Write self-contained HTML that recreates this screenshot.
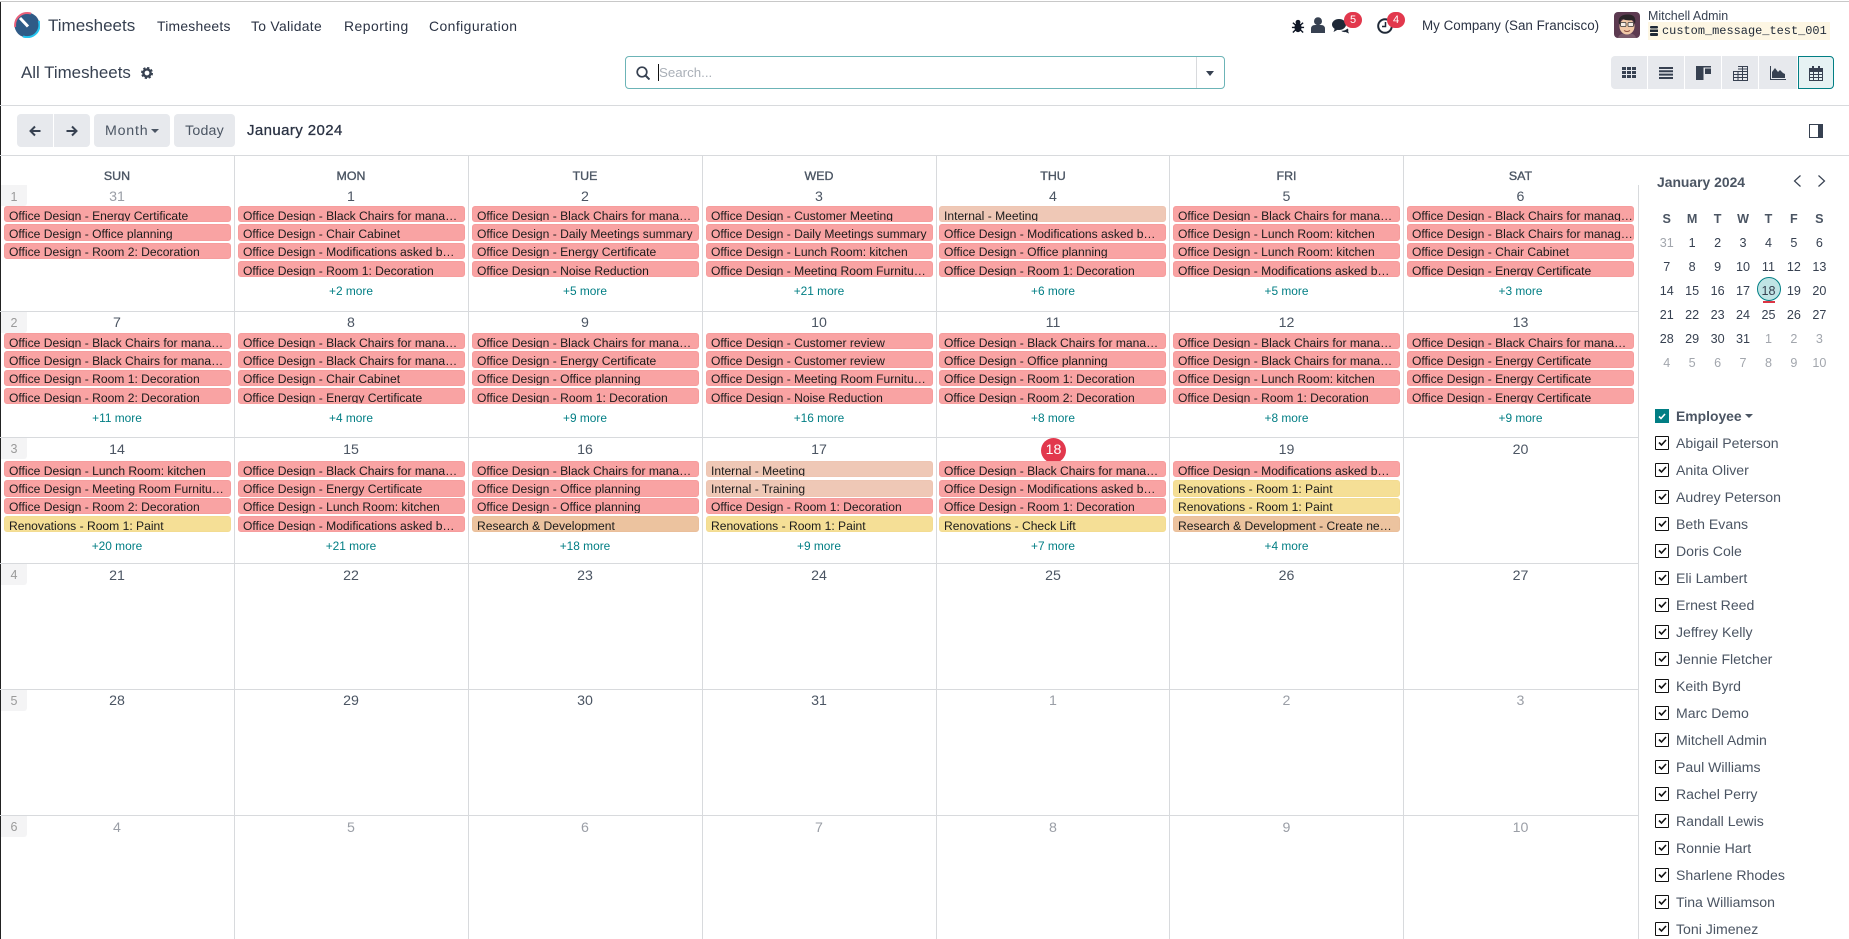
<!DOCTYPE html>
<html lang="en"><head><meta charset="utf-8"><title>Timesheets</title>
<style>
html,body{margin:0;padding:0;background:#fff}
body{position:relative;width:1849px;height:939px;overflow:hidden;font-family:"Liberation Sans",sans-serif;color:#374151}
div,span,svg{position:absolute}
.t{white-space:nowrap}
.hl{left:0;width:1849px;height:1px;background:#d8dadd}
.vl{top:155px;height:784px;width:1px;background:#d8dadd}
.rl{left:0;width:1638px;height:1px;background:#d8dadd}
.m{top:18px;line-height:16px;font-size:13.9px;color:#2b3344;white-space:nowrap}
.btn{top:114px;height:33px;background:#e7e9ed;border-radius:4px;font-size:14.2px;line-height:35px;color:#4b5563;text-align:center}
.vb{top:56px;height:33px;width:36px;background:#e7e9ed}
.hd{top:168px;width:234px;text-align:center;font-size:12.4px;line-height:16px;color:#4b5563;-webkit-text-stroke:.35px #4b5563}
.d{width:234px;text-align:center;font-size:14.2px;line-height:16px;color:#4b5563}
.g{color:#9a9ea6}
.w{left:1px;width:26px;background:#f4f4f5;border-radius:0 0 3px 0;color:#9a9a9a;font-size:12.5px;text-align:center}
.e{width:227px;box-sizing:border-box;padding-left:4px;border:1px solid #f69d9d;border-radius:3px;background:#f9a3a3;overflow:hidden;white-space:nowrap;font-size:12.1px;color:#1b1b1b}
.y{background:#f5df96;border-color:#f3dc92}.n{background:#efc8b6;border-color:#eec5b2}.b{background:#ecc39f;border-color:#eabf9b}
.k0{left:4px}.k1{left:238px}.k2{left:472px}.k3{left:706px}.k4{left:939px}.k5{left:1173px}.k6{left:1407px}
.l0{left:0}.l1{left:234px}.l2{left:468px}.l3{left:702px}.l4{left:936px}.l5{left:1169.5px}.l6{left:1403.5px}
.a1{top:206px;height:16px;line-height:18px}.a2{top:224px;height:17px;line-height:18px}.a3{top:243px;height:16px;line-height:16px}.a4{top:261px;height:16px;line-height:18px}
.b1{top:333px;height:16px;line-height:18px}.b2{top:351px;height:17px;line-height:18px}.b3{top:370px;height:16px;line-height:16px}.b4{top:388px;height:16px;line-height:18px}
.c1{top:461px;height:16px;line-height:18px}.c2{top:480px;height:17px;line-height:16px}.c3{top:498px;height:16px;line-height:16px}.c4{top:516px;height:16px;line-height:18px}
.o{width:234px;text-align:center;font-size:11.9px;line-height:14px;color:#017e84}
.mc{left:1654px;top:206.5px;display:grid;grid-template-columns:repeat(7,25.45px);grid-auto-rows:24px;font-size:12.6px;line-height:24px;text-align:center;color:#374151}
.mc b{font-weight:bold;color:#4b5563}
.mc i{font-style:normal;color:#a2a6ad}
.mc span{position:static}
.cb{left:1655px;width:12px;height:12px;border:1px solid #111;background:#fff;border-radius:1px}
.cb svg{left:1.5px;top:2px}
.nm{left:1676px;font-size:14.1px;line-height:16px;color:#4b5563;white-space:nowrap}
</style></head><body>

<div style="left:0;top:1px;width:1849px;height:1px;background:#c8c8c8"></div>
<div style="left:0;top:2px;width:1px;height:937px;background:#222"></div>

<svg style="left:14px;top:12px" width="26" height="26" viewBox="0 0 26 26"><circle cx="13" cy="13" r="12.5" fill="#2f5b87"/><path d="M1.2 15A12.2 12.2 0 0 1 17 1.6" fill="none" stroke="#e8607a" stroke-width="2"/><path d="M24.8 9A12.2 12.2 0 0 1 9 24.4" fill="none" stroke="#25c5f0" stroke-width="2"/><path d="M14 14.5L6 6" stroke="#fff" stroke-width="3"/></svg>
<div class="t" style="left:48px;top:16px;font-size:17px;line-height:20px;color:#374151">Timesheets</div>
<div class="m" style="left:157px;letter-spacing:.24px">Timesheets</div>
<div class="m" style="left:251px;letter-spacing:.3px">To Validate</div>
<div class="m" style="left:344px;letter-spacing:.5px">Reporting</div>
<div class="m" style="left:429px;letter-spacing:.45px">Configuration</div>

<svg style="left:1291px;top:19px" width="14" height="14" viewBox="0 0 14 15"><ellipse cx="7" cy="9" rx="3.8" ry="5" fill="#111827"/><circle cx="7" cy="3.5" r="2.6" fill="#111827"/><path d="M1.500 4l3 2.500M12.500 4l-3 2.500M.5 9h3M13.500 9h-3M1.500 14.500l3-3M12.500 14.500l-3-3" stroke="#111827" stroke-width="1.500"/></svg>
<svg style="left:1311px;top:17px" width="14" height="16" viewBox="0 0 14 16"><circle cx="7" cy="4.200" r="4" fill="#374151"/><path d="M0 16V12Q0 8 4 8H10Q14 8 14 12V16Z" fill="#374151"/></svg>
<svg style="left:1332px;top:19px" width="18" height="15" viewBox="0 0 18 15"><ellipse cx="7" cy="5.500" rx="7" ry="5.500" fill="#1f2937"/><path d="M3 9L1.500 13 7 10Z" fill="#1f2937"/><path d="M9 11.800Q13 12 15.500 9.500 17 11 16 12l1 2.500-3.500-1.500Q11 13.500 9 11.800Z" fill="#1f2937"/></svg>
<div style="left:1344px;top:12px;width:18px;height:16px;border-radius:8px;background:#e2384d;color:#fff;font-size:11px;line-height:16px;text-align:center">5</div>
<svg style="left:1377px;top:18px" width="16" height="16" viewBox="0 0 16 16"><circle cx="8" cy="8" r="6.800" fill="none" stroke="#1f2937" stroke-width="2"/><path d="M8.500 4v4.500H5" fill="none" stroke="#1f2937" stroke-width="1.500"/></svg>
<div style="left:1387px;top:12px;width:18px;height:16px;border-radius:8px;background:#e2384d;color:#fff;font-size:11px;line-height:16px;text-align:center">4</div>
<div class="t" style="left:1422px;top:18px;font-size:13.4px;line-height:16px;color:#2b3344">My Company (San Francisco)</div>

<svg style="left:1614px;top:12px" width="26" height="26" viewBox="0 0 26 26"><rect width="26" height="26" rx="4" fill="#5c3a50"/><path d="M4 26Q5 21 13 21T22 26Z" fill="#7a5a6b"/><ellipse cx="13" cy="14.500" rx="7.500" ry="8" fill="#f1c9a8"/><path d="M5 12Q3 3 13 2.500T21 12L19 8Q13 9 8 7 6 9 6.500 12Z" fill="#2a2528"/><rect x="6.500" y="10.500" width="5.500" height="4" rx="1" fill="#f6eee6" stroke="#333" stroke-width=".8"/><rect x="14" y="10.500" width="5.500" height="4" rx="1" fill="#f6eee6" stroke="#333" stroke-width=".8"/><path d="M10 18.500q3 2 6 0" stroke="#8a4b3a" fill="none"/></svg>
<div class="t" style="left:1648px;top:8.500px;font-size:12.45px;line-height:15px;color:#374151">Mitchell Admin</div>
<div style="left:1648px;top:22px;width:182px;height:18px;background:#fdf6e3"></div>
<svg style="left:1650px;top:26px" width="8" height="10" viewBox="0 0 8 10"><rect width="8" height="2.500" rx="1" fill="#1f2937"/><rect y="3.500" width="8" height="2.500" fill="#1f2937"/><rect y="7" width="8" height="3" rx="1" fill="#1f2937"/></svg>
<div class="t" style="left:1662px;top:23px;font-family:'Liberation Mono',monospace;font-size:11.95px;line-height:16px;color:#1f2937">custom_message_test_001</div>

<div class="t" style="left:21px;top:63px;font-size:16.9px;line-height:20px;color:#374151">All Timesheets</div>
<svg style="left:141px;top:67px" width="12" height="12" viewBox="0 0 12 12"><circle cx="6" cy="6" r="3.600" fill="none" stroke="#374151" stroke-width="2.400"/><circle cx="6" cy="6" r="5.200" fill="none" stroke="#374151" stroke-width="1.600" stroke-dasharray="2.300 1.780"/></svg>

<div style="left:625px;top:56px;width:598px;height:31px;border:1px solid #6cb4b7;border-radius:4px;background:#fff"></div>
<div style="left:1196px;top:57px;width:1px;height:31px;background:#d8dadd"></div>
<svg style="left:636px;top:66px" width="14" height="14" viewBox="0 0 14 14"><circle cx="6" cy="6" r="4.800" fill="none" stroke="#374151" stroke-width="1.700"/><path d="M9.500 9.500L13.500 13.500" stroke="#374151" stroke-width="2"/></svg>
<div style="left:658px;top:64px;width:1px;height:17px;background:#111"></div>
<div class="t" style="left:659px;top:65px;font-size:13.3px;line-height:16px;color:#aab0b8">Search...</div>
<svg style="left:1206px;top:71px" width="8" height="5" viewBox="0 0 8 5"><path d="M0 0H8L4 5Z" fill="#374151"/></svg>

<div class="vb" style="left:1611px;border-radius:4px 0 0 4px"></div><div class="vb" style="left:1648px"></div><div class="vb" style="left:1685px"></div><div class="vb" style="left:1722px"></div><div class="vb" style="left:1759px;width:38px"></div>
<div class="vb" style="left:1798px;width:34px;height:31px;background:#e6f2f3;border:1px solid #017e84;border-radius:0 4px 4px 0"></div>
<svg style="left:1622px;top:66px" width="14" height="13" viewBox="0 0 14 13"><path fill="#374151" d="M0 1h4v3H0zM5 1h4v3H5zM10 1h4v3h-4zM0 5h4v3H0zM5 5h4v3H5zM10 5h4v3h-4zM0 9h4v3H0zM5 9h4v3H5zM10 9h4v3h-4z"/></svg>
<svg style="left:1659px;top:66px" width="14" height="13" viewBox="0 0 14 13"><path fill="#374151" d="M0 1h14v2H0zM0 4.300h14v2H0zM0 7.600h14v2H0zM0 11h14v2H0z"/></svg>
<svg style="left:1696px;top:66px" width="15" height="14" viewBox="0 0 15 14"><path fill="#374151" d="M0 0h15v1.500H0zM0 1h7.500v13H0zM9 2.500h6v5.500H9z"/></svg>
<svg style="left:1733px;top:66px" width="15" height="15" viewBox="0 0 15 15"><path fill="none" stroke="#374151" d="M.5 5.500h14v9H.5zM5 .5h9.500v14M.5 8.500h14M.5 11.500h14M5 5.500v9M9.500.5v14M5 3h9.500"/></svg>
<svg style="left:1770px;top:66px" width="16" height="14" viewBox="0 0 16 14"><path fill="#374151" d="M2 12V6l3-4 3 4 2-2 3 3 2 1v4z"/><path fill="#374151" d="M0 0h1v13h15v1H0z"/></svg>
<svg style="left:1809px;top:66px" width="14" height="15" viewBox="0 0 14 15"><path fill="#374151" d="M0 2h14v4H0z"/><path fill="#374151" d="M3 0h2v3H3zM9 0h2v3H9z"/><path fill="none" stroke="#374151" d="M.5 5.500h13v9H.5zM.5 8.500h13M.5 11.500h13M4.500 5.500v9M9.500 5.500v9"/></svg>

<div class="hl" style="top:105px"></div>

<div class="btn" style="left:17px;width:36px;border-radius:4px 0 0 4px"></div>
<div class="btn" style="left:54px;width:36px;border-radius:0 4px 4px 0"></div>
<svg style="left:29px;top:125px" width="12" height="12" viewBox="0 0 12 12"><path d="M11.500 6H2M6 1.500L1.500 6 6 10.500" fill="none" stroke="#374151" stroke-width="2"/></svg>
<svg style="left:66px;top:125px" width="12" height="12" viewBox="0 0 12 12"><path d="M.5 6H10M6 1.500L10.500 6 6 10.500" fill="none" stroke="#374151" stroke-width="2"/></svg>
<div class="btn" style="left:94px;width:76px;text-align:left;text-indent:11px;letter-spacing:.8px">Month</div>
<svg style="left:151px;top:129px" width="8" height="4" viewBox="0 0 8 4"><path d="M0 0H8L4 4Z" fill="#4b5563"/></svg>
<div class="btn" style="left:174px;width:61px;letter-spacing:.2px">Today</div>
<div class="t" style="left:247px;top:123px;font-size:15px;letter-spacing:.4px;line-height:16px;color:#2b3344;-webkit-text-stroke:.3px #2b3344">January 2024</div>
<svg style="left:1809px;top:124px" width="14" height="14" viewBox="0 0 14 14"><rect x=".5" y=".5" width="13" height="13" fill="#fff" stroke="#374151"/><rect x="9" y="0" width="5" height="14" fill="#374151"/></svg>

<div class="hl" style="top:155px"></div>
<div class="vl" style="left:234px"></div><div class="vl" style="left:468px"></div><div class="vl" style="left:702px"></div><div class="vl" style="left:936px"></div><div class="vl" style="left:1169px"></div><div class="vl" style="left:1403px"></div><div class="vl" style="left:1638px;top:185px;height:754px"></div>
<div class="rl" style="top:311px"></div><div class="rl" style="top:437px"></div><div class="rl" style="top:563px"></div><div class="rl" style="top:689px"></div><div class="rl" style="top:815px"></div>

<div class="hd l0">SUN</div><div class="hd l1">MON</div><div class="hd l2">TUE</div><div class="hd l3">WED</div><div class="hd l4">THU</div><div class="hd l5">FRI</div><div class="hd l6">SAT</div>

<div class="w" style="top:185px;height:21px;line-height:24px">1</div>
<div class="w" style="top:312px;height:21px;line-height:22px">2</div>
<div class="w" style="top:438px;height:21px;line-height:22px">3</div>
<div class="w" style="top:564px;height:21px;line-height:22px">4</div>
<div class="w" style="top:690px;height:21px;line-height:22px">5</div>
<div class="w" style="top:816px;height:21px;line-height:22px">6</div>

<div class="d g l0" style="top:189px">31</div><div class="d l1" style="top:189px">1</div><div class="d l2" style="top:189px">2</div><div class="d l3" style="top:189px">3</div><div class="d l4" style="top:189px">4</div><div class="d l5" style="top:189px">5</div><div class="d l6" style="top:189px">6</div>
<div class="d l0" style="top:315px">7</div><div class="d l1" style="top:315px">8</div><div class="d l2" style="top:315px">9</div><div class="d l3" style="top:315px">10</div><div class="d l4" style="top:315px">11</div><div class="d l5" style="top:315px">12</div><div class="d l6" style="top:315px">13</div>
<div class="d l0" style="top:442px">14</div><div class="d l1" style="top:442px">15</div><div class="d l2" style="top:442px">16</div><div class="d l3" style="top:442px">17</div>
<div style="left:1041px;top:438px;width:25px;height:25px;border-radius:50%;background:#e2384d;color:#fff;font-size:14.2px;line-height:25px;text-align:center">18</div>
<div class="d l5" style="top:442px">19</div><div class="d l6" style="top:442px">20</div>
<div class="d l0" style="top:568px">21</div><div class="d l1" style="top:568px">22</div><div class="d l2" style="top:568px">23</div><div class="d l3" style="top:568px">24</div><div class="d l4" style="top:568px">25</div><div class="d l5" style="top:568px">26</div><div class="d l6" style="top:568px">27</div>
<div class="d l0" style="top:693px">28</div><div class="d l1" style="top:693px">29</div><div class="d l2" style="top:693px">30</div><div class="d l3" style="top:693px">31</div><div class="d g l4" style="top:693px">1</div><div class="d g l5" style="top:693px">2</div><div class="d g l6" style="top:693px">3</div>
<div class="d g l0" style="top:820px">4</div><div class="d g l1" style="top:820px">5</div><div class="d g l2" style="top:820px">6</div><div class="d g l3" style="top:820px">7</div><div class="d g l4" style="top:820px">8</div><div class="d g l5" style="top:820px">9</div><div class="d g l6" style="top:820px">10</div>

<div class="e k0 a1">Office Design - Energy Certificate</div><div class="e k0 a2">Office Design - Office planning</div><div class="e k0 a3">Office Design - Room 2: Decoration</div>
<div class="e k1 a1">Office Design - Black Chairs for mana…</div><div class="e k1 a2">Office Design - Chair Cabinet</div><div class="e k1 a3">Office Design - Modifications asked b…</div><div class="e k1 a4">Office Design - Room 1: Decoration</div><div class="o l1" style="top:284px">+2 more</div>
<div class="e k2 a1">Office Design - Black Chairs for mana…</div><div class="e k2 a2">Office Design - Daily Meetings summary</div><div class="e k2 a3">Office Design - Energy Certificate</div><div class="e k2 a4">Office Design - Noise Reduction</div><div class="o l2" style="top:284px">+5 more</div>
<div class="e k3 a1">Office Design - Customer Meeting</div><div class="e k3 a2">Office Design - Daily Meetings summary</div><div class="e k3 a3">Office Design - Lunch Room: kitchen</div><div class="e k3 a4">Office Design - Meeting Room Furnitu…</div><div class="o l3" style="top:284px">+21 more</div>
<div class="e n k4 a1">Internal - Meeting</div><div class="e k4 a2">Office Design - Modifications asked b…</div><div class="e k4 a3">Office Design - Office planning</div><div class="e k4 a4">Office Design - Room 1: Decoration</div><div class="o l4" style="top:284px">+6 more</div>
<div class="e k5 a1">Office Design - Black Chairs for mana…</div><div class="e k5 a2">Office Design - Lunch Room: kitchen</div><div class="e k5 a3">Office Design - Lunch Room: kitchen</div><div class="e k5 a4">Office Design - Modifications asked b…</div><div class="o l5" style="top:284px">+5 more</div>
<div class="e k6 a1">Office Design - Black Chairs for manag…</div><div class="e k6 a2">Office Design - Black Chairs for manag…</div><div class="e k6 a3">Office Design - Chair Cabinet</div><div class="e k6 a4">Office Design - Energy Certificate</div><div class="o l6" style="top:284px">+3 more</div>

<div class="e k0 b1">Office Design - Black Chairs for mana…</div><div class="e k0 b2">Office Design - Black Chairs for mana…</div><div class="e k0 b3">Office Design - Room 1: Decoration</div><div class="e k0 b4">Office Design - Room 2: Decoration</div><div class="o l0" style="top:411px">+11 more</div>
<div class="e k1 b1">Office Design - Black Chairs for mana…</div><div class="e k1 b2">Office Design - Black Chairs for mana…</div><div class="e k1 b3">Office Design - Chair Cabinet</div><div class="e k1 b4">Office Design - Energy Certificate</div><div class="o l1" style="top:411px">+4 more</div>
<div class="e k2 b1">Office Design - Black Chairs for mana…</div><div class="e k2 b2">Office Design - Energy Certificate</div><div class="e k2 b3">Office Design - Office planning</div><div class="e k2 b4">Office Design - Room 1: Decoration</div><div class="o l2" style="top:411px">+9 more</div>
<div class="e k3 b1">Office Design - Customer review</div><div class="e k3 b2">Office Design - Customer review</div><div class="e k3 b3">Office Design - Meeting Room Furnitu…</div><div class="e k3 b4">Office Design - Noise Reduction</div><div class="o l3" style="top:411px">+16 more</div>
<div class="e k4 b1">Office Design - Black Chairs for mana…</div><div class="e k4 b2">Office Design - Office planning</div><div class="e k4 b3">Office Design - Room 1: Decoration</div><div class="e k4 b4">Office Design - Room 2: Decoration</div><div class="o l4" style="top:411px">+8 more</div>
<div class="e k5 b1">Office Design - Black Chairs for mana…</div><div class="e k5 b2">Office Design - Black Chairs for mana…</div><div class="e k5 b3">Office Design - Lunch Room: kitchen</div><div class="e k5 b4">Office Design - Room 1: Decoration</div><div class="o l5" style="top:411px">+8 more</div>
<div class="e k6 b1">Office Design - Black Chairs for mana…</div><div class="e k6 b2">Office Design - Energy Certificate</div><div class="e k6 b3">Office Design - Energy Certificate</div><div class="e k6 b4">Office Design - Energy Certificate</div><div class="o l6" style="top:411px">+9 more</div>

<div class="e k0 c1">Office Design - Lunch Room: kitchen</div><div class="e k0 c2">Office Design - Meeting Room Furnitu…</div><div class="e k0 c3">Office Design - Room 2: Decoration</div><div class="e y k0 c4">Renovations - Room 1: Paint</div><div class="o l0" style="top:539px">+20 more</div>
<div class="e k1 c1">Office Design - Black Chairs for mana…</div><div class="e k1 c2">Office Design - Energy Certificate</div><div class="e k1 c3">Office Design - Lunch Room: kitchen</div><div class="e k1 c4">Office Design - Modifications asked b…</div><div class="o l1" style="top:539px">+21 more</div>
<div class="e k2 c1">Office Design - Black Chairs for mana…</div><div class="e k2 c2">Office Design - Office planning</div><div class="e k2 c3">Office Design - Office planning</div><div class="e b k2 c4">Research &amp; Development</div><div class="o l2" style="top:539px">+18 more</div>
<div class="e n k3 c1">Internal - Meeting</div><div class="e n k3 c2">Internal - Training</div><div class="e k3 c3">Office Design - Room 1: Decoration</div><div class="e y k3 c4">Renovations - Room 1: Paint</div><div class="o l3" style="top:539px">+9 more</div>
<div class="e k4 c1">Office Design - Black Chairs for mana…</div><div class="e k4 c2">Office Design - Modifications asked b…</div><div class="e k4 c3">Office Design - Room 1: Decoration</div><div class="e y k4 c4">Renovations - Check Lift</div><div class="o l4" style="top:539px">+7 more</div>
<div class="e k5 c1">Office Design - Modifications asked b…</div><div class="e y k5 c2">Renovations - Room 1: Paint</div><div class="e y k5 c3">Renovations - Room 1: Paint</div><div class="e b k5 c4">Research &amp; Development - Create ne…</div><div class="o l5" style="top:539px">+4 more</div>

<div class="t" style="left:1657px;top:174px;font-size:13.9px;line-height:16px;font-weight:bold;color:#4b5563">January 2024</div>
<svg style="left:1793px;top:175px" width="9" height="12" viewBox="0 0 9 12"><path d="M7.500.5L1.500 6l6 5.500" fill="none" stroke="#374151" stroke-width="1.200"/></svg>
<svg style="left:1817px;top:175px" width="9" height="12" viewBox="0 0 9 12"><path d="M1.500.5l6 5.500-6 5.500" fill="none" stroke="#374151" stroke-width="1.200"/></svg>
<div style="left:1757px;top:277px;width:22px;height:22px;border:1px solid #017e84;border-radius:50%;background:#c0e4e5"></div>
<div style="left:1763px;top:301px;width:12px;height:2px;background:#dc3545"></div>
<div class="mc"><b>S</b><b>M</b><b>T</b><b>W</b><b>T</b><b>F</b><b>S</b>
<i>31</i><span>1</span><span>2</span><span>3</span><span>4</span><span>5</span><span>6</span>
<span>7</span><span>8</span><span>9</span><span>10</span><span>11</span><span>12</span><span>13</span>
<span>14</span><span>15</span><span>16</span><span>17</span><span>18</span><span>19</span><span>20</span>
<span>21</span><span>22</span><span>23</span><span>24</span><span>25</span><span>26</span><span>27</span>
<span>28</span><span>29</span><span>30</span><span>31</span><i>1</i><i>2</i><i>3</i>
<i>4</i><i>5</i><i>6</i><i>7</i><i>8</i><i>9</i><i>10</i></div>

<div style="left:1655px;top:409px;width:14px;height:14px;background:#017e84"></div>
<svg style="left:1658px;top:413px" width="8" height="7" viewBox="0 0 8 7"><path d="M1 3.500l2 2L7 1" fill="none" stroke="#fff" stroke-width="1.600"/></svg>
<div class="nm" style="top:408px;font-weight:bold;font-size:13.9px">Employee</div>
<svg style="left:1745px;top:414px" width="8" height="4" viewBox="0 0 8 4"><path d="M0 0H8L4 4Z" fill="#4b5563"/></svg>

<div class="cb" style="top:436px"><svg width="9" height="8" viewBox="0 0 9 8"><path d="M1 3.500l2.500 2.500L8 1" fill="none" stroke="#111" stroke-width="1.600"/></svg></div><div class="nm" style="top:435px">Abigail Peterson</div>
<div class="cb" style="top:463px"><svg width="9" height="8" viewBox="0 0 9 8"><path d="M1 3.500l2.500 2.500L8 1" fill="none" stroke="#111" stroke-width="1.600"/></svg></div><div class="nm" style="top:462px">Anita Oliver</div>
<div class="cb" style="top:490px"><svg width="9" height="8" viewBox="0 0 9 8"><path d="M1 3.500l2.500 2.500L8 1" fill="none" stroke="#111" stroke-width="1.600"/></svg></div><div class="nm" style="top:489px">Audrey Peterson</div>
<div class="cb" style="top:517px"><svg width="9" height="8" viewBox="0 0 9 8"><path d="M1 3.500l2.500 2.500L8 1" fill="none" stroke="#111" stroke-width="1.600"/></svg></div><div class="nm" style="top:516px">Beth Evans</div>
<div class="cb" style="top:544px"><svg width="9" height="8" viewBox="0 0 9 8"><path d="M1 3.500l2.500 2.500L8 1" fill="none" stroke="#111" stroke-width="1.600"/></svg></div><div class="nm" style="top:543px">Doris Cole</div>
<div class="cb" style="top:571px"><svg width="9" height="8" viewBox="0 0 9 8"><path d="M1 3.500l2.500 2.500L8 1" fill="none" stroke="#111" stroke-width="1.600"/></svg></div><div class="nm" style="top:570px">Eli Lambert</div>
<div class="cb" style="top:598px"><svg width="9" height="8" viewBox="0 0 9 8"><path d="M1 3.500l2.500 2.500L8 1" fill="none" stroke="#111" stroke-width="1.600"/></svg></div><div class="nm" style="top:597px">Ernest Reed</div>
<div class="cb" style="top:625px"><svg width="9" height="8" viewBox="0 0 9 8"><path d="M1 3.500l2.500 2.500L8 1" fill="none" stroke="#111" stroke-width="1.600"/></svg></div><div class="nm" style="top:624px">Jeffrey Kelly</div>
<div class="cb" style="top:652px"><svg width="9" height="8" viewBox="0 0 9 8"><path d="M1 3.500l2.500 2.500L8 1" fill="none" stroke="#111" stroke-width="1.600"/></svg></div><div class="nm" style="top:651px">Jennie Fletcher</div>
<div class="cb" style="top:679px"><svg width="9" height="8" viewBox="0 0 9 8"><path d="M1 3.500l2.500 2.500L8 1" fill="none" stroke="#111" stroke-width="1.600"/></svg></div><div class="nm" style="top:678px">Keith Byrd</div>
<div class="cb" style="top:706px"><svg width="9" height="8" viewBox="0 0 9 8"><path d="M1 3.500l2.500 2.500L8 1" fill="none" stroke="#111" stroke-width="1.600"/></svg></div><div class="nm" style="top:705px">Marc Demo</div>
<div class="cb" style="top:733px"><svg width="9" height="8" viewBox="0 0 9 8"><path d="M1 3.500l2.500 2.500L8 1" fill="none" stroke="#111" stroke-width="1.600"/></svg></div><div class="nm" style="top:732px">Mitchell Admin</div>
<div class="cb" style="top:760px"><svg width="9" height="8" viewBox="0 0 9 8"><path d="M1 3.500l2.500 2.500L8 1" fill="none" stroke="#111" stroke-width="1.600"/></svg></div><div class="nm" style="top:759px">Paul Williams</div>
<div class="cb" style="top:787px"><svg width="9" height="8" viewBox="0 0 9 8"><path d="M1 3.500l2.500 2.500L8 1" fill="none" stroke="#111" stroke-width="1.600"/></svg></div><div class="nm" style="top:786px">Rachel Perry</div>
<div class="cb" style="top:814px"><svg width="9" height="8" viewBox="0 0 9 8"><path d="M1 3.500l2.500 2.500L8 1" fill="none" stroke="#111" stroke-width="1.600"/></svg></div><div class="nm" style="top:813px">Randall Lewis</div>
<div class="cb" style="top:841px"><svg width="9" height="8" viewBox="0 0 9 8"><path d="M1 3.500l2.500 2.500L8 1" fill="none" stroke="#111" stroke-width="1.600"/></svg></div><div class="nm" style="top:840px">Ronnie Hart</div>
<div class="cb" style="top:868px"><svg width="9" height="8" viewBox="0 0 9 8"><path d="M1 3.500l2.500 2.500L8 1" fill="none" stroke="#111" stroke-width="1.600"/></svg></div><div class="nm" style="top:867px">Sharlene Rhodes</div>
<div class="cb" style="top:895px"><svg width="9" height="8" viewBox="0 0 9 8"><path d="M1 3.500l2.500 2.500L8 1" fill="none" stroke="#111" stroke-width="1.600"/></svg></div><div class="nm" style="top:894px">Tina Williamson</div>
<div class="cb" style="top:922px"><svg width="9" height="8" viewBox="0 0 9 8"><path d="M1 3.500l2.500 2.500L8 1" fill="none" stroke="#111" stroke-width="1.600"/></svg></div><div class="nm" style="top:921px">Toni Jimenez</div>
</body></html>
